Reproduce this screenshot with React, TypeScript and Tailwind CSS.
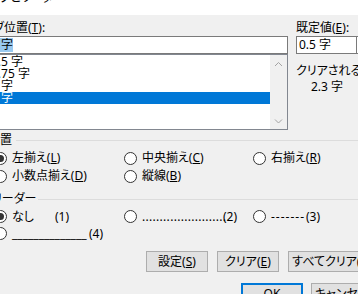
import type { ReactNode } from 'react';

// アクセスキーの下線
const K = ({ children }: { children: ReactNode }) => (
    <span className="underline decoration-1 underline-offset-[1px]">{children}</span>
);

const Radio = ({ checked = false }: { checked?: boolean }) => (
    <span className="flex h-[13px] w-[13px] shrink-0 items-center justify-center rounded-full border border-[#333333] bg-white">
        {checked && <span className="h-[7px] w-[7px] rounded-full bg-[#333333]" />}
    </span>
);

const Option = ({ checked = false, row = 'h-[18px]', children }: { checked?: boolean; row?: string; children: ReactNode }) => (
    <label className={`flex items-center gap-[5px] whitespace-nowrap ${row}`}>
        <Radio checked={checked} />
        <span className="flex">{children}</span>
    </label>
);

const Group = ({ label, labelClass }: { label: string; labelClass: string }) => (
    <div className="flex h-[16px] items-center">
        <span className={`whitespace-nowrap ${labelClass}`}>{label}</span>
        <span className="h-px flex-1 bg-[#dcdcdc]" />
    </div>
);

const Btn = ({ w = 'w-[62px]', children, primary = false }: { w?: string; children: ReactNode; primary?: boolean }) => (
    <button
        className={`flex h-[21px] shrink-0 items-center justify-center whitespace-nowrap bg-[#e1e1e1] ${w} ${
            primary ? 'border-2 border-[#0078d7]' : 'border border-[#adadad]'
        }`}
    >
        {children}
    </button>
);

const Chevron = ({ down = false }: { down?: boolean }) => (
    <svg width="9" height="6" viewBox="0 0 9 6">
        <path d={down ? 'M1 1.5 L4.5 5 L8 1.5' : 'M1 5 L4.5 1.5 L8 5'} fill="none" stroke="#a3a3a3" strokeWidth="1" />
    </svg>
);

const tabs = ['1.5 字', '1.75 字', '2 字', '3 字'];

export default function App() {
    return (
        <div className="h-[294px] w-[358px] overflow-hidden bg-[#f0f0f0] font-['Noto_Sans','Noto_Sans_CJK_JP',sans-serif] text-[12px] leading-[16px] text-black [font-feature-settings:'palt']">
            {/* タイトルバー */}
            <div className="flex h-[15px] justify-between overflow-hidden bg-white">
                <span className="ml-[-11px] mt-[-10px] whitespace-nowrap">タブとリーダー</span>
                <div className="mt-[-12px] flex gap-[32px] pr-[2px]">
                    <span>?</span>
                    <span>✕</span>
                </div>
            </div>

            <div className="pt-[5px]">
                {/* タブ位置 / 既定値 */}
                <div className="flex">
                    <div className="ml-[-12px] w-[300px] shrink-0">
                        <div className="ml-[-5px] whitespace-nowrap">
                            タブ位置(<K>T</K>):
                        </div>
                        <div className="flex h-[18px] items-center border border-[#7a7a7a] bg-white pl-[2px]">
                            <span className="bg-[#99c9ef] leading-[14px]">3 字</span>
                        </div>
                        <div className="flex h-[76px] border border-[#828790] bg-white">
                            <div className="flex-1 pt-px">
                                {tabs.map((t, i) => (
                                    <div
                                        key={t}
                                        className={`h-[12px] pl-[2px] leading-[12px] ${i === 3 ? 'bg-[#0078d7] text-white' : ''}`}
                                    >
                                        {t}
                                    </div>
                                ))}
                            </div>
                            <div className="flex w-[17px] flex-col justify-between bg-[#f0f0f0]">
                                <div className="flex h-[17px] items-center justify-center">
                                    <Chevron />
                                </div>
                                <div className="flex h-[17px] items-center justify-center">
                                    <Chevron down />
                                </div>
                            </div>
                        </div>
                    </div>

                    <div className="ml-[8px] shrink-0 whitespace-nowrap">
                        <div>
                            既定値(<K>E</K>):
                        </div>
                        <div className="flex h-[18px] w-[80px] border border-[#7a7a7a] bg-white">
                            <span className="w-[59px] pl-[2px]">0.5 字</span>
                            <span className="flex-1 border-l border-[#7a7a7a]" />
                        </div>
                        <div className="mt-[9px]">クリアされるタブ:</div>
                        <div className="pl-[15px]">2.3 字</div>
                    </div>
                </div>

                {/* 配置 */}
                <div className="mt-[2px]">
                    <Group label="配置" labelClass="ml-[-12px] pr-[4px]" />
                    <div className="ml-[-6px] mt-px grid grid-cols-[130px_129px_1fr]">
                        <Option checked>
                            左揃え(<K>L</K>)
                        </Option>
                        <Option>
                            中央揃え(<K>C</K>)
                        </Option>
                        <Option>
                            右揃え(<K>R</K>)
                        </Option>
                        <Option>
                            小数点揃え(<K>D</K>)
                        </Option>
                        <Option>
                            縦線(<K>B</K>)
                        </Option>
                    </div>
                </div>

                {/* リーダー */}
                <div className="mt-[6px]">
                    <Group label="リーダー" labelClass="ml-[-8px] pr-[2px]" />
                    <div className="ml-[-6px] mt-px grid grid-cols-[130px_129px_1fr]">
                        <Option checked row="h-[17px]">
                            <span className="w-[43px]">なし</span>
                            <span>(1)</span>
                        </Option>
                        <Option row="h-[17px]">
                            <span className="w-[81px] tracking-[0.3px]">........................</span>
                            <span>(2)</span>
                        </Option>
                        <Option row="h-[17px]">
                            <span className="w-[35px] tracking-[1px]">-------</span>
                            <span>(3)</span>
                        </Option>
                        <Option row="h-[17px]">
                            <span className="w-[77px]">______________</span>
                            <span>(4)</span>
                        </Option>
                    </div>
                </div>

                {/* ボタン */}
                <div className="mt-[9px] flex gap-[9px] pl-[146px]">
                    <Btn>
                        設定(<K>S</K>)
                    </Btn>
                    <Btn>
                        クリア(<K>E</K>)
                    </Btn>
                    <Btn w="w-[88px]">
                        すべてクリア(<K>A</K>)
                    </Btn>
                </div>
                <div className="mt-[11px] flex gap-[8px] pl-[241px]">
                    <Btn primary>OK</Btn>
                    <Btn>キャンセル</Btn>
                </div>
            </div>
        </div>
    );
}
